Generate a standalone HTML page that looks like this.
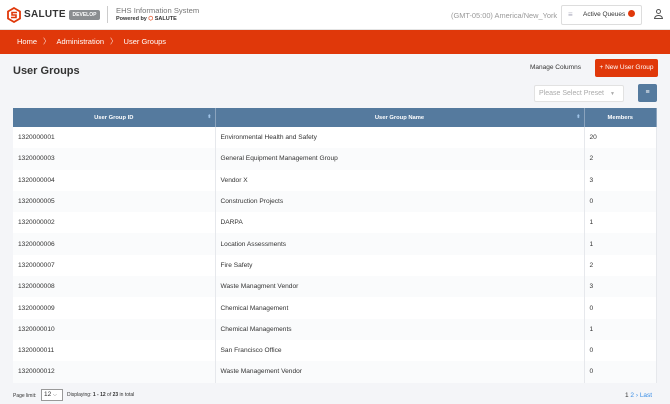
<!DOCTYPE html><html><head><style>
*{margin:0;padding:0;box-sizing:border-box}
body{width:670px;height:404px;overflow:hidden;background:#f4f5f8;font-family:"Liberation Sans",sans-serif;color:#333;position:relative}
.hdr{position:absolute;left:0;top:0;width:670px;height:30px;background:#fff;border-bottom:1px solid #e4e4e4}
.bc{position:absolute;top:30px;left:0;width:670px;height:24px;background:#e0380a;color:#fff;font-size:7.5px;line-height:24px;padding-left:17px}
.bc span{margin:0 6px;opacity:.8}
.a{position:absolute}
table{position:absolute;left:13px;top:108px;width:644px;border-collapse:collapse;font-size:6.6px}
th{background:#557a9e;color:#fff;height:19px;font-weight:bold;font-size:5.8px;border-right:1px solid #8aa3bd;position:relative}
td{height:21.3px;padding-left:5px;border-right:1px solid #e6e8ec}
tr:nth-child(odd) td{background:#fafbfc}
tr:nth-child(even) td{background:#fff}
.s{position:absolute;right:3px;top:6px;color:#9fc4e8;font-size:5px}
</style></head><body>
<div class="hdr">
<svg class="a" style="left:7px;top:7px" width="14" height="16" viewBox="0 0 14 16"><path d="M7 1 L13 4.5 V11.5 L7 15 L1 11.5 V4.5Z" fill="none" stroke="#e0380a" stroke-width="1.8"/><path d="M10 5.5H5v2.5h4v2.5H4" fill="none" stroke="#e0380a" stroke-width="1.6"/></svg>
<div class="a" style="left:24px;top:9px;font-size:10px;font-weight:bold;color:#333;letter-spacing:.3px">SALUTE</div>
<div class="a" style="left:69px;top:10px;width:31px;height:10px;background:#8a8d90;color:#fff;font-size:5px;font-weight:bold;line-height:10px;text-align:center;border-radius:2px">DEVELOP</div>
<div class="a" style="left:107px;top:6px;width:1px;height:17px;background:#ccc"></div>
<div class="a" style="left:116px;top:6px;font-size:7.6px;color:#777">EHS Information System</div>
<div class="a" style="left:116px;top:16px;font-size:5.5px;font-weight:bold;color:#333">Powered by <span style="color:#e0380a">⬡</span> SALUTE</div>
<div class="a" style="left:451px;top:11px;font-size:7.4px;color:#999">(GMT-05:00) America/New_York</div>
<div class="a" style="left:561px;top:5px;width:81px;height:20px;border:1px solid #ddd;border-radius:2px;background:#fff"></div>
<div class="a" style="left:568px;top:10px;font-size:8px;color:#aab">≡</div>
<div class="a" style="left:583px;top:11px;font-size:6.5px;color:#333">Active Queues</div>
<div class="a" style="left:628px;top:10px;width:7px;height:7px;border-radius:50%;background:#e0380a"></div>
<div class="a" style="left:654px;top:9px;width:9px;height:11px;"><div style="width:5px;height:5px;border:1px solid #555;border-radius:50%;margin-left:2px"></div><div style="width:9px;height:4px;border:1px solid #555;border-radius:4px 4px 0 0;margin-top:1px"></div></div>
</div>
<div class="bc">Home<span>〉</span>Administration<span>〉</span>User Groups</div>
<div class="a" style="left:13px;top:65px;font-size:11px;font-weight:bold;color:#333">User Groups</div>
<div class="a" style="left:530px;top:64px;font-size:6.5px;color:#333">Manage Columns</div>
<div class="a" style="left:595px;top:59px;width:63px;height:18px;background:#e0380a;border-radius:2px;color:#fff;font-size:6.5px;line-height:18px;text-align:center">+ New User Group</div>
<div class="a" style="left:534px;top:85px;width:90px;height:17px;background:#fff;border:1px solid #e2e2e2;border-radius:2px;font-size:7px;color:#aaa;line-height:15px;padding-left:4px">Please Select Preset <span style="font-size:5px;margin-left:4px">▼</span></div>
<div class="a" style="left:638px;top:84px;width:19px;height:18px;background:#557a9e;border-radius:2px;color:#fff;font-size:7px;text-align:center;line-height:18px">≡</div>
<table>
<tr><th style="width:202px">User Group ID<span class="s">⬍</span></th><th style="width:369px">User Group Name<span class="s">⬍</span></th><th>Members</th></tr>
<tr><td>1320000001</td><td>Environmental Health and Safety</td><td>20</td></tr>
<tr><td>1320000003</td><td>General Equipment Management Group</td><td>2</td></tr>
<tr><td>1320000004</td><td>Vendor X</td><td>3</td></tr>
<tr><td>1320000005</td><td>Construction Projects</td><td>0</td></tr>
<tr><td>1320000002</td><td>DARPA</td><td>1</td></tr>
<tr><td>1320000006</td><td>Location Assessments</td><td>1</td></tr>
<tr><td>1320000007</td><td>Fire Safety</td><td>2</td></tr>
<tr><td>1320000008</td><td>Waste Managment Vendor</td><td>3</td></tr>
<tr><td>1320000009</td><td>Chemical Management</td><td>0</td></tr>
<tr><td>1320000010</td><td>Chemical Managements</td><td>1</td></tr>
<tr><td>1320000011</td><td>San Francisco Office</td><td>0</td></tr>
<tr><td>1320000012</td><td>Waste Management Vendor</td><td>0</td></tr>
</table>
<div class="a" style="left:13px;top:393px;font-size:5px;color:#333">Page limit:</div>
<div class="a" style="left:41px;top:389px;width:22px;height:12px;border:1px solid #999;background:#fff;font-size:6.5px;line-height:10px;padding-left:2px">12 <span style="font-size:5px;color:#666">⌵</span></div>
<div class="a" style="left:67px;top:392px;font-size:5px;color:#333">Displaying: <b>1 - 12</b> of <b>23</b> in total</div>
<div class="a" style="left:625px;top:392px;font-size:6.5px;color:#333">1 <span style="color:#3a8ee6">2 › Last</span></div>
</body></html>
